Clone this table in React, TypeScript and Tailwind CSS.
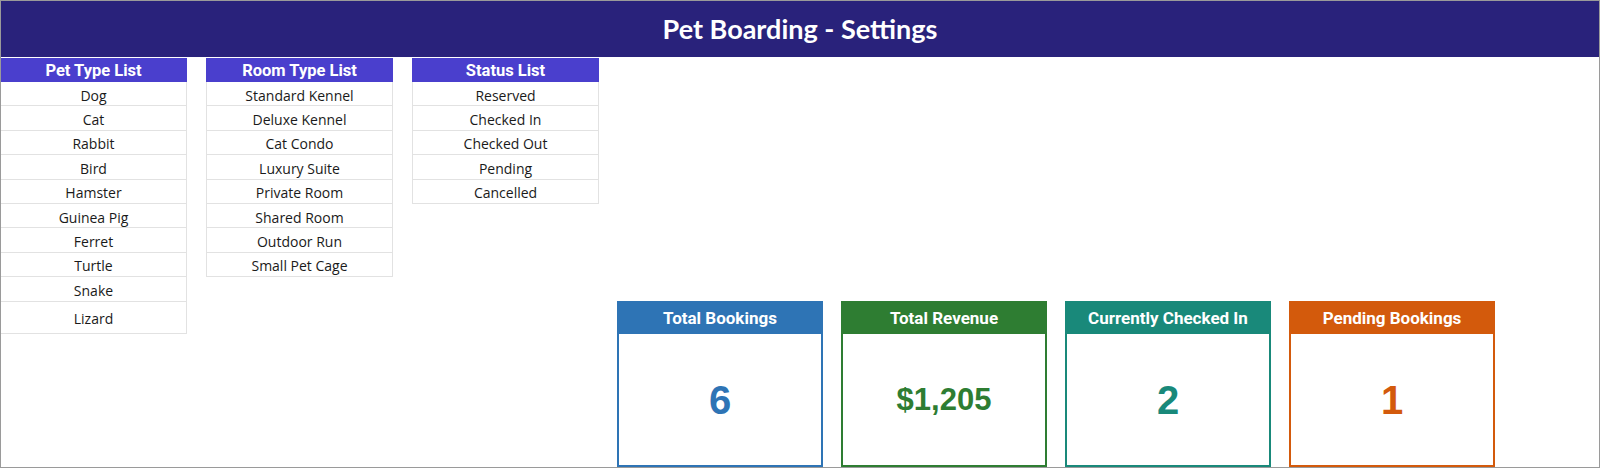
import React from "react";

const pets = ["Dog", "Cat", "Rabbit", "Bird", "Hamster", "Guinea Pig", "Ferret", "Turtle", "Snake", "Lizard"];
const rooms = ["Standard Kennel", "Deluxe Kennel", "Cat Condo", "Luxury Suite", "Private Room", "Shared Room", "Outdoor Run", "Small Pet Cage"];
const statuses = ["Reserved", "Checked In", "Checked Out", "Pending", "Cancelled"];

function List({ title, items, tallLast }: { title: string; items: string[]; tallLast?: boolean }) {
  return (
    <div className="w-[187px] shrink-0 flex flex-col">
      <div className="h-[24px] pt-[3px] bg-[#4a3fcd] text-white font-bold text-[16.5px] flex items-center justify-center leading-none [font-family:Roboto,sans-serif]">
        {title}
      </div>
      {items.map((it, i) => (
        <div
          key={it}
          className={`${tallLast && i === items.length - 1 ? "h-[32px]" : "h-[24.4px]"} pt-[3px] border-x border-b border-[#e2e2e2] flex items-center justify-center text-[14px] text-[#1a1a1a] [font-family:'Open_Sans',sans-serif]`}
        >
          {it}
        </div>
      ))}
    </div>
  );
}

function Card({ title, value, color, big }: { title: string; value: string; color: string; big?: boolean }) {
  return (
    <div className="w-[206px] shrink-0 flex flex-col">
      <div
        className="h-[33px] pt-[3px] text-white font-bold text-[17px] flex items-center justify-center [font-family:Roboto,sans-serif]"
        style={{ backgroundColor: color }}
      >
        {title}
      </div>
      <div
        className="h-[133px] border-2 border-t-0 bg-white flex items-center justify-center font-bold [font-family:'Liberation_Sans',Arial,sans-serif]"
        style={{ borderColor: color, color }}
      >
        <span className={big ? "text-[40px] leading-none" : "text-[31px] leading-none"}>{value}</span>
      </div>
    </div>
  );
}

export default function App() {
  return (
    <div className="w-[1600px] h-[468px] border border-[#9a9a9a] bg-white overflow-hidden box-border">
      <div className="h-[56px] bg-[#29227b] flex items-center justify-center text-white font-bold text-[27px] [font-family:Lato,sans-serif]">
        Pet Boarding - Settings
      </div>
      <div className="mt-[1px] flex gap-[19px] -ml-[1px]">
        <List title="Pet Type List" items={pets} tallLast />
        <List title="Room Type List" items={rooms} />
        <List title="Status List" items={statuses} />
        <div className="pt-[243px] flex gap-[18px] -ml-[1px]">
          <Card title="Total Bookings" value="6" color="#2e74b5" big />
          <Card title="Total Revenue" value="$1,205" color="#2e7d32" />
          <Card title="Currently Checked In" value="2" color="#19897a" big />
          <Card title="Pending Bookings" value="1" color="#d35a0c" big />
        </div>
      </div>
    </div>
  );
}
